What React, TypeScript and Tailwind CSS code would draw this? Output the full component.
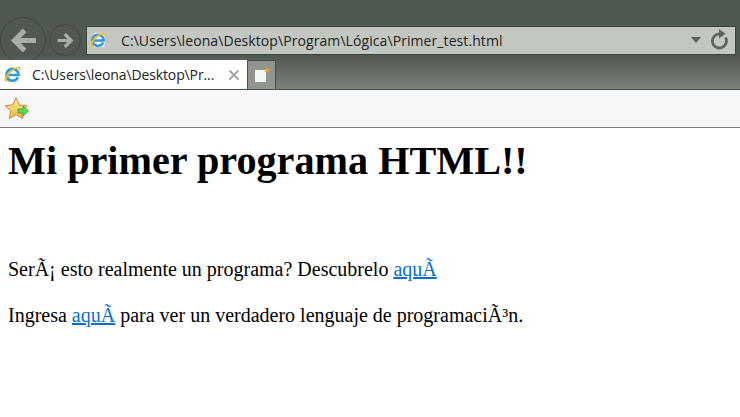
import { X } from "lucide-react";

function IeLogo({ size, page }: { size: number; page?: boolean }) {
  return (
    <svg width={size} height={size} viewBox="0 0 18 18" className="shrink-0">
      {page && <path d="M4 0.500h9.500L17 4v13.500H4z" fill="#f4f4f2" stroke="#b9bdb8" strokeWidth="0.7" />}
      <path d="M14.800 11.800A6.300 6.300 0 1 1 15.300 9.500H4.500" fill="none" stroke="#2f9bdc" strokeWidth="2.800" />
      <path d="M0.800 15.500C-.5 12.500 4.500 5 10.500 2.300c3.200-1.500 6-1.800 6.800-.7.600.9-.2 2.300-1.400 3.700.2-1.300.1-2.200-.6-2.500-1.300-.5-4.200.7-7 3C4.500 9 2.400 13 3.300 15.200c.5 1 1.800 1.200 3.500.8-2.500 1.300-5 .8-6-.5z" fill="#f2b632" />
    </svg>
  );
}

function FavoritesIcon() {
  return (
    <svg width="24" height="24" viewBox="0 0 24 24">
      <defs>
        <linearGradient id="star" x1="0" y1="0" x2="0" y2="1">
          <stop offset="0" stopColor="#ffef9e" />
          <stop offset="1" stopColor="#f8b23e" />
        </linearGradient>
      </defs>
      <path d="M11 0.800l3.200 7.200 7.800.7-5.900 5.200 1.800 7.600-6.900-4-6.900 4 1.800-7.600L0 8.700 7.800 8z" fill="url(#star)" stroke="#c98a2b" strokeWidth="1" strokeLinejoin="round" />
      <path d="M13 12h5V9l5.500 5-5.500 5v-3h-5z" fill="#62d84f" stroke="#2f9a34" strokeWidth="0.8" strokeLinejoin="round" />
    </svg>
  );
}

function NavButton({ size, arrow }: { size: number; arrow: number }) {
  return (
    <div
      className="flex shrink-0 items-center justify-center rounded-full border border-[#3f473e]"
      style={{ width: size, height: size }}
    >
      <svg width={arrow} height={arrow} viewBox="0 0 24 24" fill="none" stroke="#a9aeaa" strokeWidth="4.500">
        <path d={size > 40 ? "M23 12H4M13 3l-9 9 9 9" : "M1 12h19M11 3l9 9-9 9"} />
      </svg>
    </div>
  );
}

export default function App() {
  return (
    <div className="flex h-[417px] w-[740px] flex-col overflow-hidden bg-white">
      {/* Browser chrome */}
      <div className="flex h-[90px] shrink-0 flex-col justify-end border-b border-[#474e47] bg-[linear-gradient(to_bottom,#50594f_0%,#50594f_62%,#7b817b_100%)] font-['Open_Sans',sans-serif]">
        <div className="mb-[-3px] flex items-center pr-1">
          <div className="flex items-center gap-[3px]">
            <NavButton size={46} arrow={27} />
            <NavButton size={32} arrow={17} />
          </div>
          <div className="ml-[5px] flex h-[29px] flex-1 items-center border border-[#3b423b] bg-[#c2c7c2] pl-[3px] pr-1">
            <IeLogo size={16} page />
            <span className="ml-[15px] flex-1 text-[14px] tracking-[0.08px] text-[#222]">
              C:\Users\leona\Desktop\Program\Lógica\Primer_test.html
            </span>
            <svg width="10" height="6" viewBox="0 0 10 6" className="mr-[9px]">
              <path d="M0 0h10L5 6z" fill="#5b605b" />
            </svg>
            <svg width="19" height="21" viewBox="0 0 19 21" fill="none" className="mr-[2px] mb-0.5">
              <path d="M15.500 8.500A7 7 0 1 1 10 5" stroke="#5e635e" strokeWidth="2.800" />
              <path d="M9 0l6.500 4.800L9 9.500z" fill="#5e635e" />
            </svg>
          </div>
        </div>
        <div className="relative flex h-[29px] items-stretch">
          <div className="flex w-[248px] items-center border-r border-[#474e47] bg-white pl-1 pr-[5px]">
            <IeLogo size={17} />
            <span className="ml-[11px] flex-1 truncate text-[14px] tracking-[-0.12px] text-[#222]">
              C:\Users\leona\Desktop\Pr...
            </span>
            <X size={16} strokeWidth={3} color="#a3a5a3" />
          </div>
          <div className="flex w-[28px] items-center justify-center border-r border-t border-[#474e47] bg-[#909590]">
            <svg width="16" height="16" viewBox="0 0 16 16">
              <path d="M1 3h11v12H1z" fill="#f5f5f3" />
              <path d="M12.500 0l.8 1.600 1.700-.3-.7 1.700 1.200 1.200-1.700.3-.5 1.600-1.200-1.300-1.700.2.800-1.600-.8-1.500 1.700.2z" fill="#f4a62a" />
            </svg>
          </div>
        </div>
      </div>

      {/* Favorites bar */}
      <div className="flex h-[38px] shrink-0 items-center border-b border-[#7a7a7a] bg-[#f7f7f7] pl-[5px]">
        <FavoritesIcon />
      </div>

      {/* Page */}
      <div className="px-2 font-['Liberation_Serif',serif] text-[20px] leading-[23px] text-black">
        <h1 className="mt-[10px] text-[40.2px] leading-[46px] font-bold">Mi primer programa HTML!!</h1>
        <p className="mt-[74px]">
          SerÃ¡ esto realmente un programa? Descubrelo <a href="#" className="text-[#0a6ed1] underline">aquÃ</a>
        </p>
        <p className="mt-[23px]">
          Ingresa <a href="#" className="text-[#0a6ed1] underline">aquÃ</a> para ver un verdadero lenguaje de programaciÃ³n.
        </p>
      </div>
    </div>
  );
}
